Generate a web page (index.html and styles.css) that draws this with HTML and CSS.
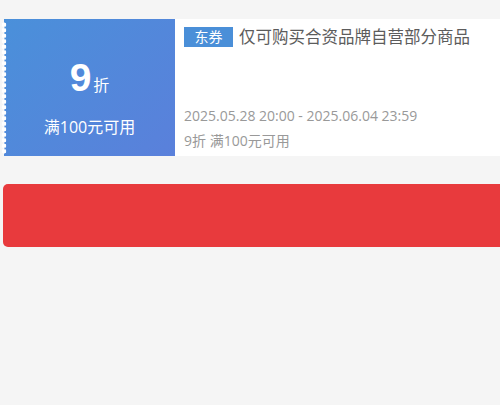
FILE: index.html
```html
<html>

<head>
  <meta name="viewport" content="width=device-width, initial-scale=1" />
  <link rel="stylesheet" href="styles.css">
  <title>优惠券</title>
</head>

<body>
  <div class="page">
    <div class="coupon">
      <div class="coupon-left">
        <div class="coupon-value">
          <span class="coupon-num">9</span><span class="coupon-unit">折</span>
        </div>
        <div class="coupon-cond">满100元可用</div>
      </div>
      <div class="coupon-right">
        <div class="coupon-title">
          <span class="coupon-tag">东券</span>
          <span class="coupon-name">仅可购买合资品牌自营部分商品</span>
        </div>
        <div class="coupon-time">2025.05.28 20:00 - 2025.06.04 23:59</div>
        <div class="coupon-desc">9折 满100元可用</div>
      </div>
    </div>

    <div class="btn-red"></div>
  </div>
</body>

</html>
```

FILE: styles.css
```css
html,
body {
  margin: 0;
  background-color: #f5f5f5;
  overflow: hidden;
}

body {
  font-family: "Open Sans", "Noto Sans CJK SC", sans-serif;
  height: 405px;
}

.page {
  width: 540px;
  padding: 19px 0 0 4px;
}

.coupon {
  display: flex;
  height: 137px;
  background-color: #fff;
}

.coupon-left {
  position: relative;
  width: 171px;
  flex-shrink: 0;
  display: flex;
  flex-direction: column;
  align-items: center;
  color: #fff;
  background: linear-gradient(135deg, #4a90da 0%, #5a80db 100%);
}

/* scalloped edge */
.coupon-left::before {
  content: "";
  position: absolute;
  left: -3px;
  top: 3px;
  bottom: 2px;
  width: 6px;
  background: radial-gradient(circle at 3px 2.75px, #fff 2px, transparent 2.6px) 0 0 / 6px 5.5px repeat-y;
}

.coupon-value {
  margin-top: 35px;
  height: 48px;
  display: flex;
  align-items: baseline;
}

.coupon-num {
  font-family: "Liberation Sans", Arial, sans-serif;
  font-size: 39px;
  font-weight: bold;
  line-height: 48px;
}

.coupon-unit {
  font-size: 16px;
  margin-left: 2px;
}

.coupon-cond {
  margin-top: 14px;
  font-size: 16px;
  line-height: 22px;
}

.coupon-right {
  flex: 1;
  padding: 8px 0 0 9px;
  display: flex;
  flex-direction: column;
}

.coupon-title {
  display: flex;
  align-items: center;
  height: 20px;
}

.coupon-tag {
  background-color: #4a8fd8;
  color: #fff;
  font-size: 14px;
  line-height: 20px;
  padding: 0 10.5px;
  margin-right: 6px;
}

.coupon-name {
  color: #5c5c5c;
  font-size: 16.5px;
  line-height: 20px;
}

.coupon-time {
  margin-top: 59px;
  color: #999;
  font-size: 14px;
  line-height: 20px;
}

.coupon-desc {
  margin-top: 5px;
  color: #999;
  font-size: 14px;
  line-height: 20px;
}

.btn-red {
  margin: 28px 0 0 -1px;
  height: 63px;
  border-radius: 5px;
  background-color: #e83a3d;
}
```
